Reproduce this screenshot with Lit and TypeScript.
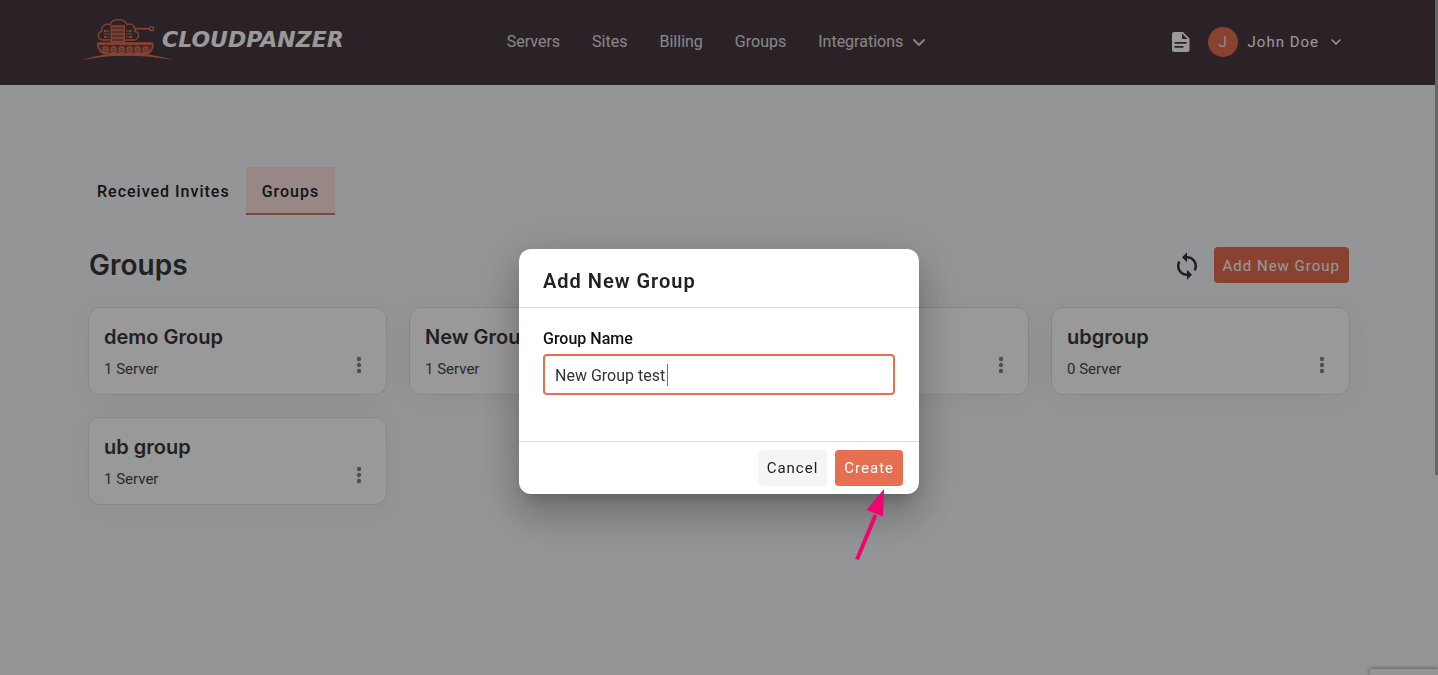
import { LitElement, html, css, svg } from "lit";
import { customElement, property, state } from "lit/decorators.js";
import { classMap } from "lit/directives/class-map.js";

interface Group {
  name: string;
  servers: number;
}

const chevron = svg`<path d="M2 4l5 5 5-5" fill="none" stroke="currentColor" stroke-width="2" stroke-linecap="round" stroke-linejoin="round" />`;

@customElement("site-header")
export class SiteHeader extends LitElement {
  static styles = css`
    :host {
      display: block;
      background: #493941;
      color: #fff;
    }
    .bar {
      display: grid;
      grid-template-columns: 1fr auto 1fr;
      align-items: center;
      box-sizing: border-box;
      height: 85px;
      padding: 0 95px 2px 90px;
    }
    .brand {
      display: flex;
      align-items: center;
      justify-self: start;
      margin: 0 0 4px -10px;
      color: #fff;
      text-decoration: none;
    }
    .word {
      margin-left: -12px;
      font: italic bold 22px/24px "DejaVu Sans", sans-serif;
    }
    .nav {
      display: flex;
      align-items: center;
      gap: 32px;
    }
    .link,
    .menu {
      display: flex;
      align-items: center;
      gap: 9px;
      padding: 0;
      border: 0;
      background: none;
      color: #e0e0e0;
      font: inherit;
      font-size: 16px;
      line-height: 24px;
      text-decoration: none;
    }
    .user {
      display: flex;
      align-items: center;
      justify-self: end;
      gap: 18px;
    }
    .doc {
      display: flex;
      color: #fff;
    }
    .account {
      display: flex;
      align-items: center;
      gap: 10px;
      padding: 0;
      border: 0;
      background: none;
      color: #fff;
      font: inherit;
      font-size: 15px;
      letter-spacing: 1px;
    }
    .avatar {
      display: grid;
      place-items: center;
      width: 30px;
      height: 30px;
      border-radius: 50%;
      background: #e76f51;
      color: #f3e4e0;
      letter-spacing: 0;
    }
  `;

  private wheels = [92, 116, 140, 164, 188, 212];

  render() {
    return html`
      <header class="bar">
        <a class="brand" href="#" aria-label="CloudPanzer">
          <svg width="94" height="43" viewBox="15 22 282 129" fill="none" stroke="#e76f51" stroke-width="4" aria-hidden="true">
            <path d="M108 88H82c-15-3-16-22-2-26-2-17 13-25 25-20 6-20 44-20 51 0 14-5 27 5 24 20 16 5 13 24-2 26h-28" />
            <path d="M109 46h39v48h-39z" fill="#e76f51" fill-opacity="0.45" />
            <path d="M109 58h39M109 70h39M109 82h39" />
            <path d="M90 61h15M86 70h19M90 79h15M152 61h12M152 70h20M152 79h15" stroke-width="3" />
            <circle cx="90" cy="61" r="2" /><circle cx="90" cy="79" r="2" />
            <circle cx="166" cy="61" r="2" /><circle cx="168" cy="79" r="2" />
            <path d="M178 54h45" stroke-width="5" />
            <circle cx="230" cy="54" r="6" stroke-width="4" />
            <path d="M69 98h163q5 7-3 20-8 11-16 11H91q-10 0-17-11-8-13-5-20z" fill="#e76f51" fill-opacity="0.25" stroke-width="5" />
            <path d="M72 99h158" stroke-width="7" />
            ${this.wheels.map((x) => svg`<circle cx=${x} cy="117" r="8" /><circle cx=${x} cy="117" r="2" />`)}
            <path d="M18 148q138-42 276 0-138-26-276 0z" fill="#e76f51" stroke="none" />
          </svg>
          <span class="word">CLOUDPANZER</span>
        </a>
        <nav class="nav">
          ${["Servers", "Sites", "Billing", "Groups"].map((t) => html`<a class="link" href="#">${t}</a>`)}
          <button class="menu" type="button">
            Integrations
            <svg width="14" height="12" viewBox="0 0 14 12" aria-hidden="true">${chevron}</svg>
          </button>
        </nav>
        <div class="user">
          <a class="doc" href="#" aria-label="Documentation">
            <svg width="18" height="20" viewBox="0 0 18 20" aria-hidden="true">
              <path fill="currentColor" fill-rule="evenodd" d="M2 0h9l6.500 6.500V18a2 2 0 0 1-2 2H2a2 2 0 0 1-2-2V2a2 2 0 0 1 2-2zM10 1.500V7h5.500zM2.500 10v1.700h12V10zM2.500 14v1.700h9V14z" />
            </svg>
          </a>
          <button class="account" type="button">
            <span class="avatar">J</span>
            <span>John Doe</span>
            <svg width="14" height="12" viewBox="-2 -1 18 15" aria-hidden="true">${chevron}</svg>
          </button>
        </div>
      </header>
    `;
  }
}

@customElement("group-card")
export class GroupCard extends LitElement {
  static styles = css`
    :host {
      display: block;
    }
    .card {
      display: flex;
      align-items: flex-end;
      justify-content: space-between;
      box-sizing: border-box;
      height: 88px;
      padding: 15px;
      border: 1px solid #e0e2e6;
      border-radius: 12px;
      background: #fff;
      box-shadow: 0 4px 24px rgba(60, 60, 80, 0.06);
    }
    .name {
      margin: 0 0 8px;
      color: #37373a;
      font: 600 20px/28px Inter, sans-serif;
    }
    .count {
      margin: 0;
      color: #46464a;
      font-size: 15px;
      line-height: 20px;
    }
    .more {
      display: flex;
      padding: 4px 8px;
      border: 0;
      background: none;
      color: #84848a;
    }
  `;

  @property({ attribute: false }) group!: Group;

  render() {
    return html`
      <article class="card">
        <div>
          <h2 class="name">${this.group.name}</h2>
          <p class="count">${this.group.servers} Server</p>
        </div>
        <button class="more" type="button" aria-label="Group actions">
          <svg width="8" height="20" viewBox="0 0 8 20" fill="currentColor" aria-hidden="true">
            <circle cx="4" cy="4" r="2.200" /><circle cx="4" cy="10" r="2.200" /><circle cx="4" cy="16" r="2.200" />
          </svg>
        </button>
      </article>
    `;
  }
}

@customElement("add-group-dialog")
export class AddGroupDialog extends LitElement {
  static styles = css`
    :host {
      position: fixed;
      inset: 0;
      z-index: 10;
      display: grid;
      place-items: center;
      padding-top: 68px;
      background: rgba(0, 0, 0, 0.4);
    }
    .dialog {
      position: relative;
      box-sizing: border-box;
      width: 400px;
      max-width: 100%;
      margin: 0;
      padding: 0;
      border: 0;
      border-radius: 12px;
      background: #fff;
      color: #212124;
      box-shadow: 0 11px 15px -7px rgba(0, 0, 0, 0.2), 0 24px 38px 3px rgba(0, 0, 0, 0.14),
        0 9px 46px 8px rgba(0, 0, 0, 0.12);
    }
    .title {
      margin: 0;
      padding: 20px 24px 14px;
      border-bottom: 1px solid #dcdfe2;
      font-size: 20px;
      font-weight: 600;
      line-height: 24px;
      letter-spacing: 1px;
    }
    .body {
      display: grid;
      gap: 5px;
      padding: 20px 24px 46px;
    }
    .label {
      color: #111;
      font-size: 16px;
      font-weight: 500;
      line-height: 21px;
    }
    .field {
      position: relative;
      display: grid;
    }
    .input {
      box-sizing: border-box;
      width: 100%;
      height: 41px;
      padding: 2px 10px 0;
      border: 2px solid #e76f51;
      border-radius: 4px;
      outline: 0;
      background: #fff;
      color: #333338;
      font: inherit;
      font-size: 16px;
    }
    .caret {
      position: absolute;
      top: 10px;
      left: 124px;
      width: 1px;
      height: 22px;
      background: #c0553b;
    }
    .footer {
      display: flex;
      justify-content: flex-end;
      gap: 8px;
      padding: 8px 16px;
      border-top: 1px solid #dcdfe2;
    }
    .button {
      height: 36px;
      padding: 0 9px;
      border: 0;
      border-radius: 4px;
      background: #f5f5f5;
      color: #212124;
      font: inherit;
      font-size: 15px;
      letter-spacing: 1px;
    }
    .primary {
      background: #e76f51;
      color: #fff;
    }
    .pointer {
      position: absolute;
      right: 29px;
      bottom: -68px;
      pointer-events: none;
    }
  `;

  @state() private name = "New Group test";

  render() {
    return html`
      <dialog class="dialog" open aria-labelledby="title">
        <h2 class="title" id="title">Add New Group</h2>
        <div class="body">
          <label class="label" for="name">Group Name</label>
          <div class="field">
            <input
              class="input"
              id="name"
              type="text"
              .value=${this.name}
              @input=${(e: Event) => (this.name = (e.target as HTMLInputElement).value)}
            />
            <span class="caret"></span>
          </div>
        </div>
        <div class="footer">
          <button class="button" type="button">Cancel</button>
          <button class="button primary" type="button">Create</button>
        </div>
        <svg class="pointer" width="36" height="74" viewBox="0 0 36 74" aria-hidden="true">
          <path d="M3 71.500L21.500 27" stroke="#f0046f" stroke-width="4" />
          <path d="M30 1L12.500 22l16.500 6.500z" fill="#f0046f" />
        </svg>
      </dialog>
    `;
  }
}

@customElement("app-root")
export class AppRoot extends LitElement {
  static styles = css`
    :host {
      display: block;
      min-height: 100vh;
      background: #f7f8fb;
      font-family: Roboto, "Noto Sans", sans-serif;
    }
    .main {
      padding: 82px 88px 64px;
    }
    .tabs {
      display: flex;
      margin-left: -7px;
    }
    .tab {
      box-sizing: border-box;
      height: 48px;
      padding: 2px 16px 0;
      border: 0;
      border-bottom: 2px solid transparent;
      background: none;
      color: #222;
      font: inherit;
      font-size: 16px;
      font-weight: 500;
      letter-spacing: 1px;
    }
    .active {
      border-color: #e76f51;
      background: #fce3de;
    }
    .heading {
      display: flex;
      align-items: center;
      gap: 12px;
      margin: 32px 0 24px;
      padding: 0 1px;
    }
    .title {
      flex: 1;
      margin: 0;
      color: #37373a;
      font: 600 28px/36px Inter, sans-serif;
    }
    .refresh {
      display: flex;
      padding: 1px 0 0;
      border: 0;
      background: none;
      color: #2f3743;
    }
    .add {
      height: 36px;
      padding: 1px 9px 0;
      border: 0;
      border-radius: 4px;
      background: #e76f51;
      color: #fff;
      font: inherit;
      font-size: 15px;
      letter-spacing: 1px;
    }
    .cards {
      display: grid;
      grid-template-columns: repeat(4, 1fr);
      gap: 22px;
    }
    .thumb {
      position: fixed;
      top: 0;
      right: 0;
      z-index: 20;
      width: 3px;
      height: 475px;
      background: #676767;
    }
    .badge {
      position: fixed;
      right: 0;
      bottom: 0;
      width: 68px;
      height: 6px;
      border-radius: 2px 0 0 0;
      background: #f9f9f9;
      box-shadow: 0 0 5px #808080;
    }
  `;

  @state() private tab = "Groups";

  private groups: Group[] = [
    { name: "demo Group", servers: 1 },
    { name: "New Group", servers: 1 },
    { name: "test", servers: 0 },
    { name: "ubgroup", servers: 0 },
    { name: "ub group", servers: 1 },
  ];

  render() {
    return html`
      <site-header></site-header>
      <main class="main">
        <div class="tabs" role="tablist">
          ${["Received Invites", "Groups"].map(
            (t) => html`<button
              type="button"
              role="tab"
              aria-selected=${t === this.tab}
              class=${classMap({ tab: true, active: t === this.tab })}
              @click=${() => (this.tab = t)}
            >${t}</button>`
          )}
        </div>
        <div class="heading">
          <h1 class="title">Groups</h1>
          <button class="refresh" type="button" aria-label="Refresh">
            <svg width="30" height="30" viewBox="0 0 24 24" fill="currentColor" aria-hidden="true">
              <path d="M12 4V1L8 5l4 4V6c3.310 0 6 2.690 6 6 0 1.010-.25 1.970-.7 2.800l1.460 1.460C19.540 15.030 20 13.570 20 12c0-4.420-3.580-8-8-8zm0 14c-3.310 0-6-2.690-6-6 0-1.010.25-1.970.7-2.800L5.240 7.740C4.460 8.970 4 10.430 4 12c0 4.420 3.580 8 8 8v3l4-4-4-4v3z" />
            </svg>
          </button>
          <button class="add" type="button">Add New Group</button>
        </div>
        <section class="cards">
          ${this.groups.map((g) => html`<group-card .group=${g}></group-card>`)}
        </section>
      </main>
      <div class="badge"></div>
      <add-group-dialog></add-group-dialog>
      <div class="thumb"></div>
    `;
  }
}
